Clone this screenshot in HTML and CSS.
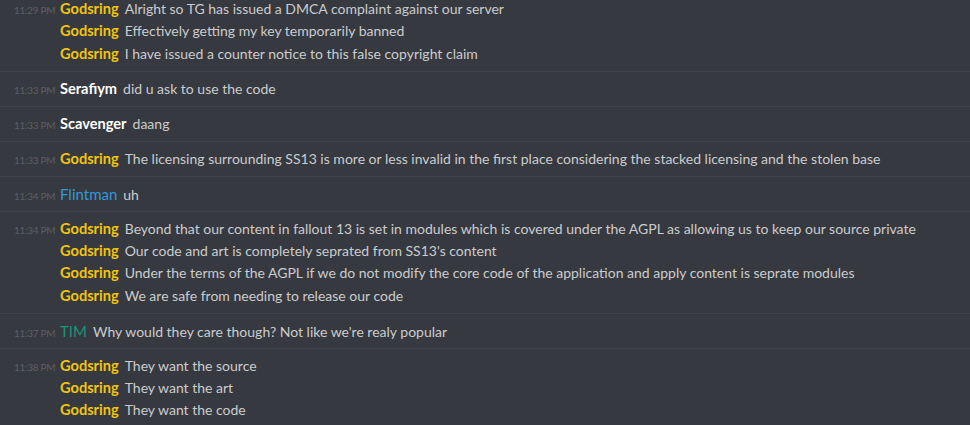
FILE: index.html
```html
<!DOCTYPE html>
<html lang="en">
<head>
  <meta charset="UTF-8">
  <title>Chat log</title>
  <link rel="stylesheet" href="styles.css">
</head>
<body>

<div class="chat">
  <!-- group 1 -->
  <div class="group first">
    <div class="line"><span class="time">11:29 PM</span><span class="name gold">Godsring</span><span class="text">Alright so TG has issued a DMCA complaint against our server</span></div>
    <div class="line"><span class="time"></span><span class="name gold">Godsring</span><span class="text">Effectively getting my key temporarily banned</span></div>
    <div class="line"><span class="time"></span><span class="name gold">Godsring</span><span class="text">I have issued a counter notice to this false copyright claim</span></div>
  </div>

  <div class="group">
    <div class="line"><span class="time">11:33 PM</span><span class="name white">Serafiym</span><span class="text">did u ask to use the code</span></div>
  </div>

  <div class="group">
    <div class="line"><span class="time">11:33 PM</span><span class="name white">Scavenger</span><span class="text">daang</span></div>
  </div>

  <div class="group">
    <div class="line"><span class="time">11:33 PM</span><span class="name gold">Godsring</span><span class="text">The licensing surrounding SS13 is more or less invalid in the first place considering the stacked licensing and the stolen base</span></div>
  </div>

  <div class="group">
    <div class="line"><span class="time">11:34 PM</span><span class="name blue">Flintman</span><span class="text">uh</span></div>
  </div>

  <div class="group">
    <div class="line"><span class="time">11:34 PM</span><span class="name gold">Godsring</span><span class="text">Beyond that our content in fallout 13 is set in modules which is covered under the AGPL as allowing us to keep our source private</span></div>
    <div class="line"><span class="time"></span><span class="name gold">Godsring</span><span class="text">Our code and art is completely seprated from SS13's content</span></div>
    <div class="line"><span class="time"></span><span class="name gold">Godsring</span><span class="text">Under the terms of the AGPL if we do not modify the core code of the application and apply content is seprate modules</span></div>
    <div class="line"><span class="time"></span><span class="name gold">Godsring</span><span class="text">We are safe from needing to release our code</span></div>
  </div>

  <div class="group">
    <div class="line"><span class="time">11:37 PM</span><span class="name teal">TIM</span><span class="text">Why would they care though? Not like we're realy popular</span></div>
  </div>

  <div class="group">
    <div class="line"><span class="time">11:38 PM</span><span class="name gold">Godsring</span><span class="text">They want the source</span></div>
    <div class="line"><span class="time"></span><span class="name gold">Godsring</span><span class="text">They want the art</span></div>
    <div class="line"><span class="time"></span><span class="name gold">Godsring</span><span class="text">They want the code</span></div>
  </div>
</div>

</body>
</html>
```

FILE: styles.css
```css
html, body {
  margin: 0;
  padding: 0;
  background: #36393f;
  height: 100%;
  overflow: hidden;
}
body {
  font-family: Lato, "Open Sans", sans-serif;
  font-size: 14px;
  color: #cbccce;
}
.chat {
  display: flex;
  flex-direction: column;
}
.group {
  padding: 6px 0 5.67px 14px;
  border-top: 1px solid #40434a;
}
.group.first {
  border-top: none;
  margin-top: -8px;
}
.line {
  display: flex;
  align-items: baseline;
  height: 22.33px;
  line-height: 22.33px;
  white-space: nowrap;
}
.time {
  width: 46px;
  flex-shrink: 0;
  font-size: 10px;
  color: #5c5f65;
  letter-spacing: -0.3px;
}
.name {
  font-size: 14.6px;
  font-weight: 700;
  margin-right: 6px;
}
.gold { color: #f1c40f; }
.white { color: #ffffff; }
.blue { color: #3498db; font-weight: 400; font-size: 15px; }
.teal { color: #189478; font-weight: 400; font-size: 15px; }
.text {
  color: #cbccce;
}
```
